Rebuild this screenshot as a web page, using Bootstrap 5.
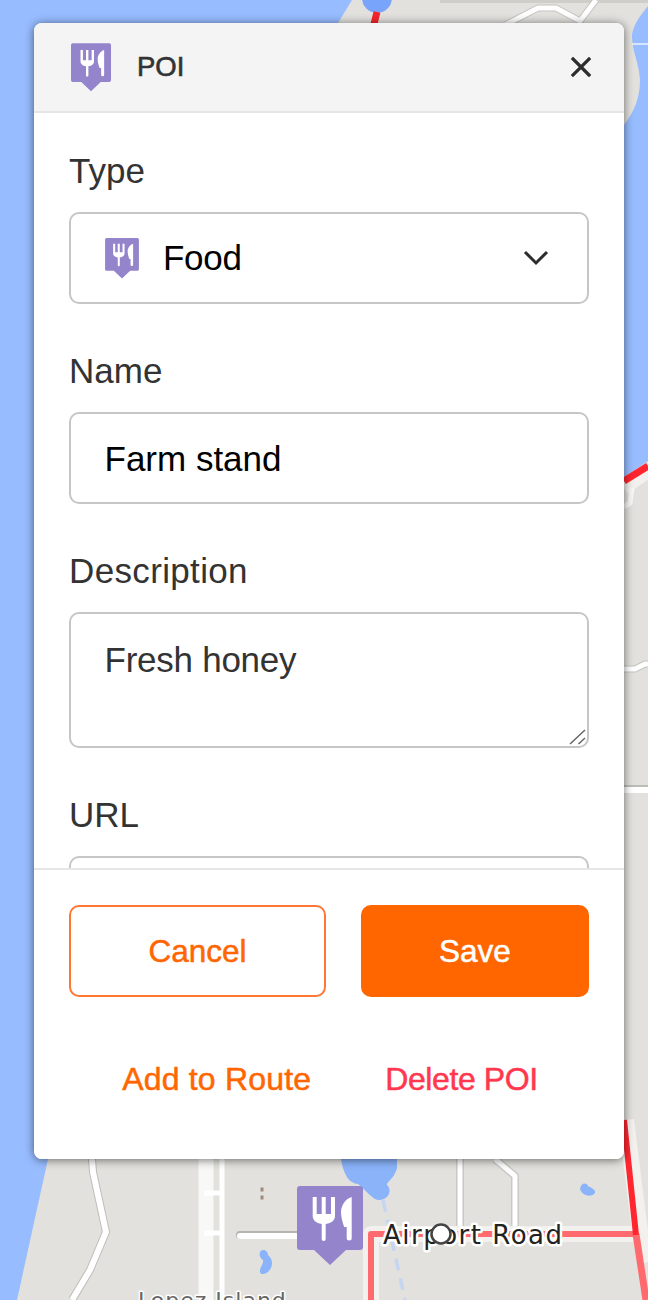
<!DOCTYPE html>
<html lang="en">
<head>
    <meta charset="UTF-8">
    <meta name="viewport" content="width=device-width, initial-scale=1">
    <title>POI</title>
    <link href="https://cdn.jsdelivr.net/npm/bootstrap@5.3.0/dist/css/bootstrap.min.css" rel="stylesheet">
    <style>
        html, body { height: 1300px; overflow: hidden; }
        body { font-family: "Liberation Sans", Arial, sans-serif; background: #97bcff; }
        .map-area { height: 1300px; padding: 23px 0 0 34px; overflow: hidden; }
        .map-svg { top: 0; left: 0; }

        .poi-panel { width: 590px; border: 0; border-radius: 8px; box-shadow: 0 1px 10px rgba(0, 0, 0, .55); z-index: 1; }
        .poi-head { height: 90px; padding: 0 32px 0 37px; background: #f4f4f4; border-bottom: 2px solid #e6e6e6; gap: 26px; }
        .poi-title { font-size: 27.5px; color: #333; -webkit-text-stroke: .6px #333; }
        .poi-close { background: none; border: 0; padding: 0; line-height: 0; }

        .poi-body { height: 755px; padding: 38px 35px 0; overflow: hidden; flex: none; }
        .poi-label { display: block; font-size: 35px; line-height: 40px; color: #333; margin-bottom: 21px; }
        .poi-label-wide { letter-spacing: .35px; }
        .poi-field { height: 92px; padding: 0 34px; font-size: 35px; color: #000; border: 2px solid #c6c6c6; border-radius: 10px; margin-bottom: 47px; }
        .poi-input { padding: 2px 33.5px 0; }
        .poi-type { gap: 24px; letter-spacing: -.3px; }
        .poi-area-wrap { margin-bottom: 47px; }
        .poi-area { height: 136px; padding: 24px 33.5px 0; margin-bottom: 0; line-height: 44px; color: #333; resize: none; letter-spacing: -.25px; }
        .poi-grip { right: 3px; bottom: 3px; }

        .poi-foot { padding: 35px 35px 60px; background: #fff; border-top: 2px solid #e6e6e6; }
        .poi-btn { height: 92px; padding-top: 8px; font-size: 31.5px; border-radius: 10px; -webkit-text-stroke: .5px; }
        .poi-cancel { width: 257px; color: #ff6600; background: #fff; border: 2px solid #ff7733; }
        .poi-save { width: 228px; color: #fff; background: #ff6600; border: 2px solid #ff6600; }
        .poi-links { margin-top: 62px; padding-left: 2px; gap: 74px; line-height: 40px; font-size: 32px; -webkit-text-stroke: .5px; }
        .poi-link-route { color: #ff6600; letter-spacing: .18px; }
        .poi-link-delete { color: #ff3850; letter-spacing: -.4px; }

        .map-label { font-family: "DejaVu Sans", sans-serif; paint-order: stroke; stroke: #fff; stroke-linejoin: round; }
    </style>
</head>
<body>

<svg width="0" height="0" class="position-absolute">
    <symbol id="food-pin" viewBox="0 0 66 80">
        <path fill="#9484cc" d="M3 0h60a3 3 0 0 1 3 3v58a3 3 0 0 1-3 3H49L33 79 17 64H3a3 3 0 0 1-3-3V3a3 3 0 0 1 3-3z"/>
        <path fill="#fff" d="M15.7 11h4v17h5V11h4v17h5.3V11h4v19c0 4-3 7-9.3 8v15a2 2 0 0 1-4 0V38c-6-1-9-4-9-8z"/>
        <path fill="#fff" d="M54.7 11v41a2.5 2.5 0 0 1-5 0V41h-2.5C45 35 44 30 44 26c0-6 4-13 10.7-15z"/>
    </symbol>
</svg>

<div class="map-area position-relative">
    <!-- Mapa de fondo -->
    <svg class="map-svg position-absolute" width="648" height="1300" viewBox="0 0 648 1300">
        <path fill="#e2e1dd" d="M352 0 338 23 200 600 48 1159 17 1300H648V461L624 477V125C634 112 640 98 640 80 639 62 632 52 632 35 634 22 642 14 648 6V0Z"/>
        <rect x="440" y="0" width="208" height="3" fill="#cfcec9"/>
        <path d="M632 44H648" stroke="#fff" stroke-width="1.5" opacity=".8"/>

        <!-- caminos arriba -->
        <g fill="none" stroke-linejoin="round">
            <path d="M505 25 538 8H556L580 21 596 0" stroke="#c4c3be" stroke-width="7"/>
            <path d="M505 25 538 8H556L580 21 596 0" stroke="#fff" stroke-width="5"/>
        </g>
        <circle cx="377" cy="-2" r="15" fill="#79a4fb"/>
        <path d="M377 12 374 24" stroke="#f4252d" stroke-width="7"/>

        <!-- caminos derecha -->
        <g fill="none">
            <path d="M624 488 648 472" stroke="#f2f1ee" stroke-width="13"/>
            <path d="M624 481 648 466" stroke="#ff2630" stroke-width="7"/>
            <path d="M632 488 630 503 624 507" stroke="#f7f7f5" stroke-width="5"/>
            <path d="M624 669H635L645 664H648" stroke="#c4c3be" stroke-width="7"/>
            <path d="M624 669H635L645 664H648" stroke="#fff" stroke-width="5"/>
            <path d="M624 789H648" stroke="#bdbcb7" stroke-width="8"/>
            <path d="M624 790H648" stroke="#fff" stroke-width="6"/>
        </g>

        <!-- caminos abajo -->
        <g fill="none" stroke-linejoin="round">
            <path d="M92 1159 93 1172 106 1232 90 1270 72 1300" stroke="#bdbcb7" stroke-width="8"/>
            <path d="M92 1159 93 1172 106 1232 90 1270 72 1300" stroke="#fff" stroke-width="6"/>
            <path d="M206 1159V1300" stroke="#f8f8f7" stroke-width="15"/>
            <path d="M222 1159V1300" stroke="#fff" stroke-width="5"/>
            <path d="M204 1193H223M204 1233H224" stroke="#fff" stroke-width="5"/>
            <path d="M240 1235H300" stroke="#b5b4af" stroke-width="8" stroke-linecap="round"/>
            <path d="M240 1236H300" stroke="#fff" stroke-width="6" stroke-linecap="round"/>
            <path d="M460 1159V1226" stroke="#c9c8c3" stroke-width="8"/>
            <path d="M460 1159V1226" stroke="#fff" stroke-width="5"/>
            <path d="M495 1159 515 1176V1226" stroke="#c9c8c3" stroke-width="8"/>
            <path d="M495 1159 515 1176V1226" stroke="#fff" stroke-width="5"/>
            <path d="M626 1120 640 1232 648 1262" stroke="#f2f1ee" stroke-width="16"/>
            <path d="M371 1300V1234H636" stroke="#f2f1ee" stroke-width="16"/>
            <path d="M636 1234 646 1300" stroke="#ff6a6e" stroke-width="7"/>
            <path d="M371 1300V1234H636" stroke="#ff6a6e" stroke-width="6"/>
            <path d="M624 1120 636 1235" stroke="#ff2630" stroke-width="6"/>
            <path d="M383 1200 405 1300" stroke="#c6d6f2" stroke-width="3.5" stroke-dasharray="12 8"/>
        </g>

        <!-- lagos -->
        <g fill="#8ab3fa">
            <path d="M341 1159C344 1177 350 1183 358 1184 366 1190 372 1199 378 1200 388 1200 392 1192 388 1186 384 1183 394 1180 397 1168V1159Z"/>
            <path d="M580 1189C581 1183 586 1182 588 1186 592 1188 596 1190 595 1193 592 1197 583 1197 580 1189Z"/>
            <path d="M260 1252C263 1248 268 1251 268 1255 272 1258 273 1264 271 1268 268 1274 261 1276 260 1272 259 1268 264 1264 263 1260 260 1258 259 1255 260 1252Z"/>
        </g>
        <path d="M262 1190V1189M262 1198V1197" stroke="#9d8a7c" stroke-width="3" stroke-linecap="square"/>

        <text class="map-label" x="383" y="1244" font-size="26" letter-spacing="1.5" fill="#222" stroke-width="5">Airport Road</text>
        <circle cx="441" cy="1234" r="9.5" fill="#fff" stroke="#444" stroke-width="2.5"/>
        <text class="map-label" x="138" y="1308" font-size="22" letter-spacing="1" fill="#666" stroke-width="3">Lopez Island</text>
        <use href="#food-pin" x="297" y="1186" width="66" height="80"/>
    </svg>

    <div class="card poi-panel position-relative overflow-hidden">
        <div class="poi-head d-flex align-items-center">
            <svg width="40" height="49"><use href="#food-pin"/></svg>
            <span class="poi-title flex-grow-1">POI</span>
            <button type="button" class="poi-close" aria-label="Close">
                <svg width="22" height="22" viewBox="0 0 22 22" fill="none" stroke="#2d2d2d" stroke-width="3.2" stroke-linecap="square"><path d="M3 3 19 19M19 3 3 19"/></svg>
            </button>
        </div>

        <div class="poi-body">
            <label class="poi-label">Type</label>
            <div class="form-control poi-field poi-type d-flex align-items-center">
                <svg width="34" height="41"><use href="#food-pin"/></svg>
                <span class="flex-grow-1">Food</span>
                <svg class="me-1" width="26" height="16" viewBox="0 0 26 16" fill="none" stroke="#2d2d2d" stroke-width="3"><path d="M2 2 13 13 24 2"/></svg>
            </div>

            <label class="poi-label">Name</label>
            <input type="text" class="form-control poi-field poi-input" value="Farm stand">

            <label class="poi-label poi-label-wide">Description</label>
            <div class="poi-area-wrap position-relative">
                <textarea class="form-control poi-field poi-area d-block">Fresh honey</textarea>
                <svg class="poi-grip position-absolute" width="18" height="18" viewBox="0 0 18 18" fill="none" stroke="#666" stroke-width="1.5"><path d="M2 17 17 3M10.5 17 17 11"/></svg>
            </div>

            <label class="poi-label">URL</label>
            <input type="text" class="form-control poi-field">
        </div>

        <div class="poi-foot">
            <div class="d-flex justify-content-between">
                <button type="button" class="btn poi-btn poi-cancel">Cancel</button>
                <button type="button" class="btn poi-btn poi-save">Save</button>
            </div>
            <div class="poi-links d-flex justify-content-center">
                <a class="poi-link-route text-decoration-none" href="#">Add to Route</a>
                <a class="poi-link-delete text-decoration-none" href="#">Delete POI</a>
            </div>
        </div>
    </div>
</div>

</body>
</html>
